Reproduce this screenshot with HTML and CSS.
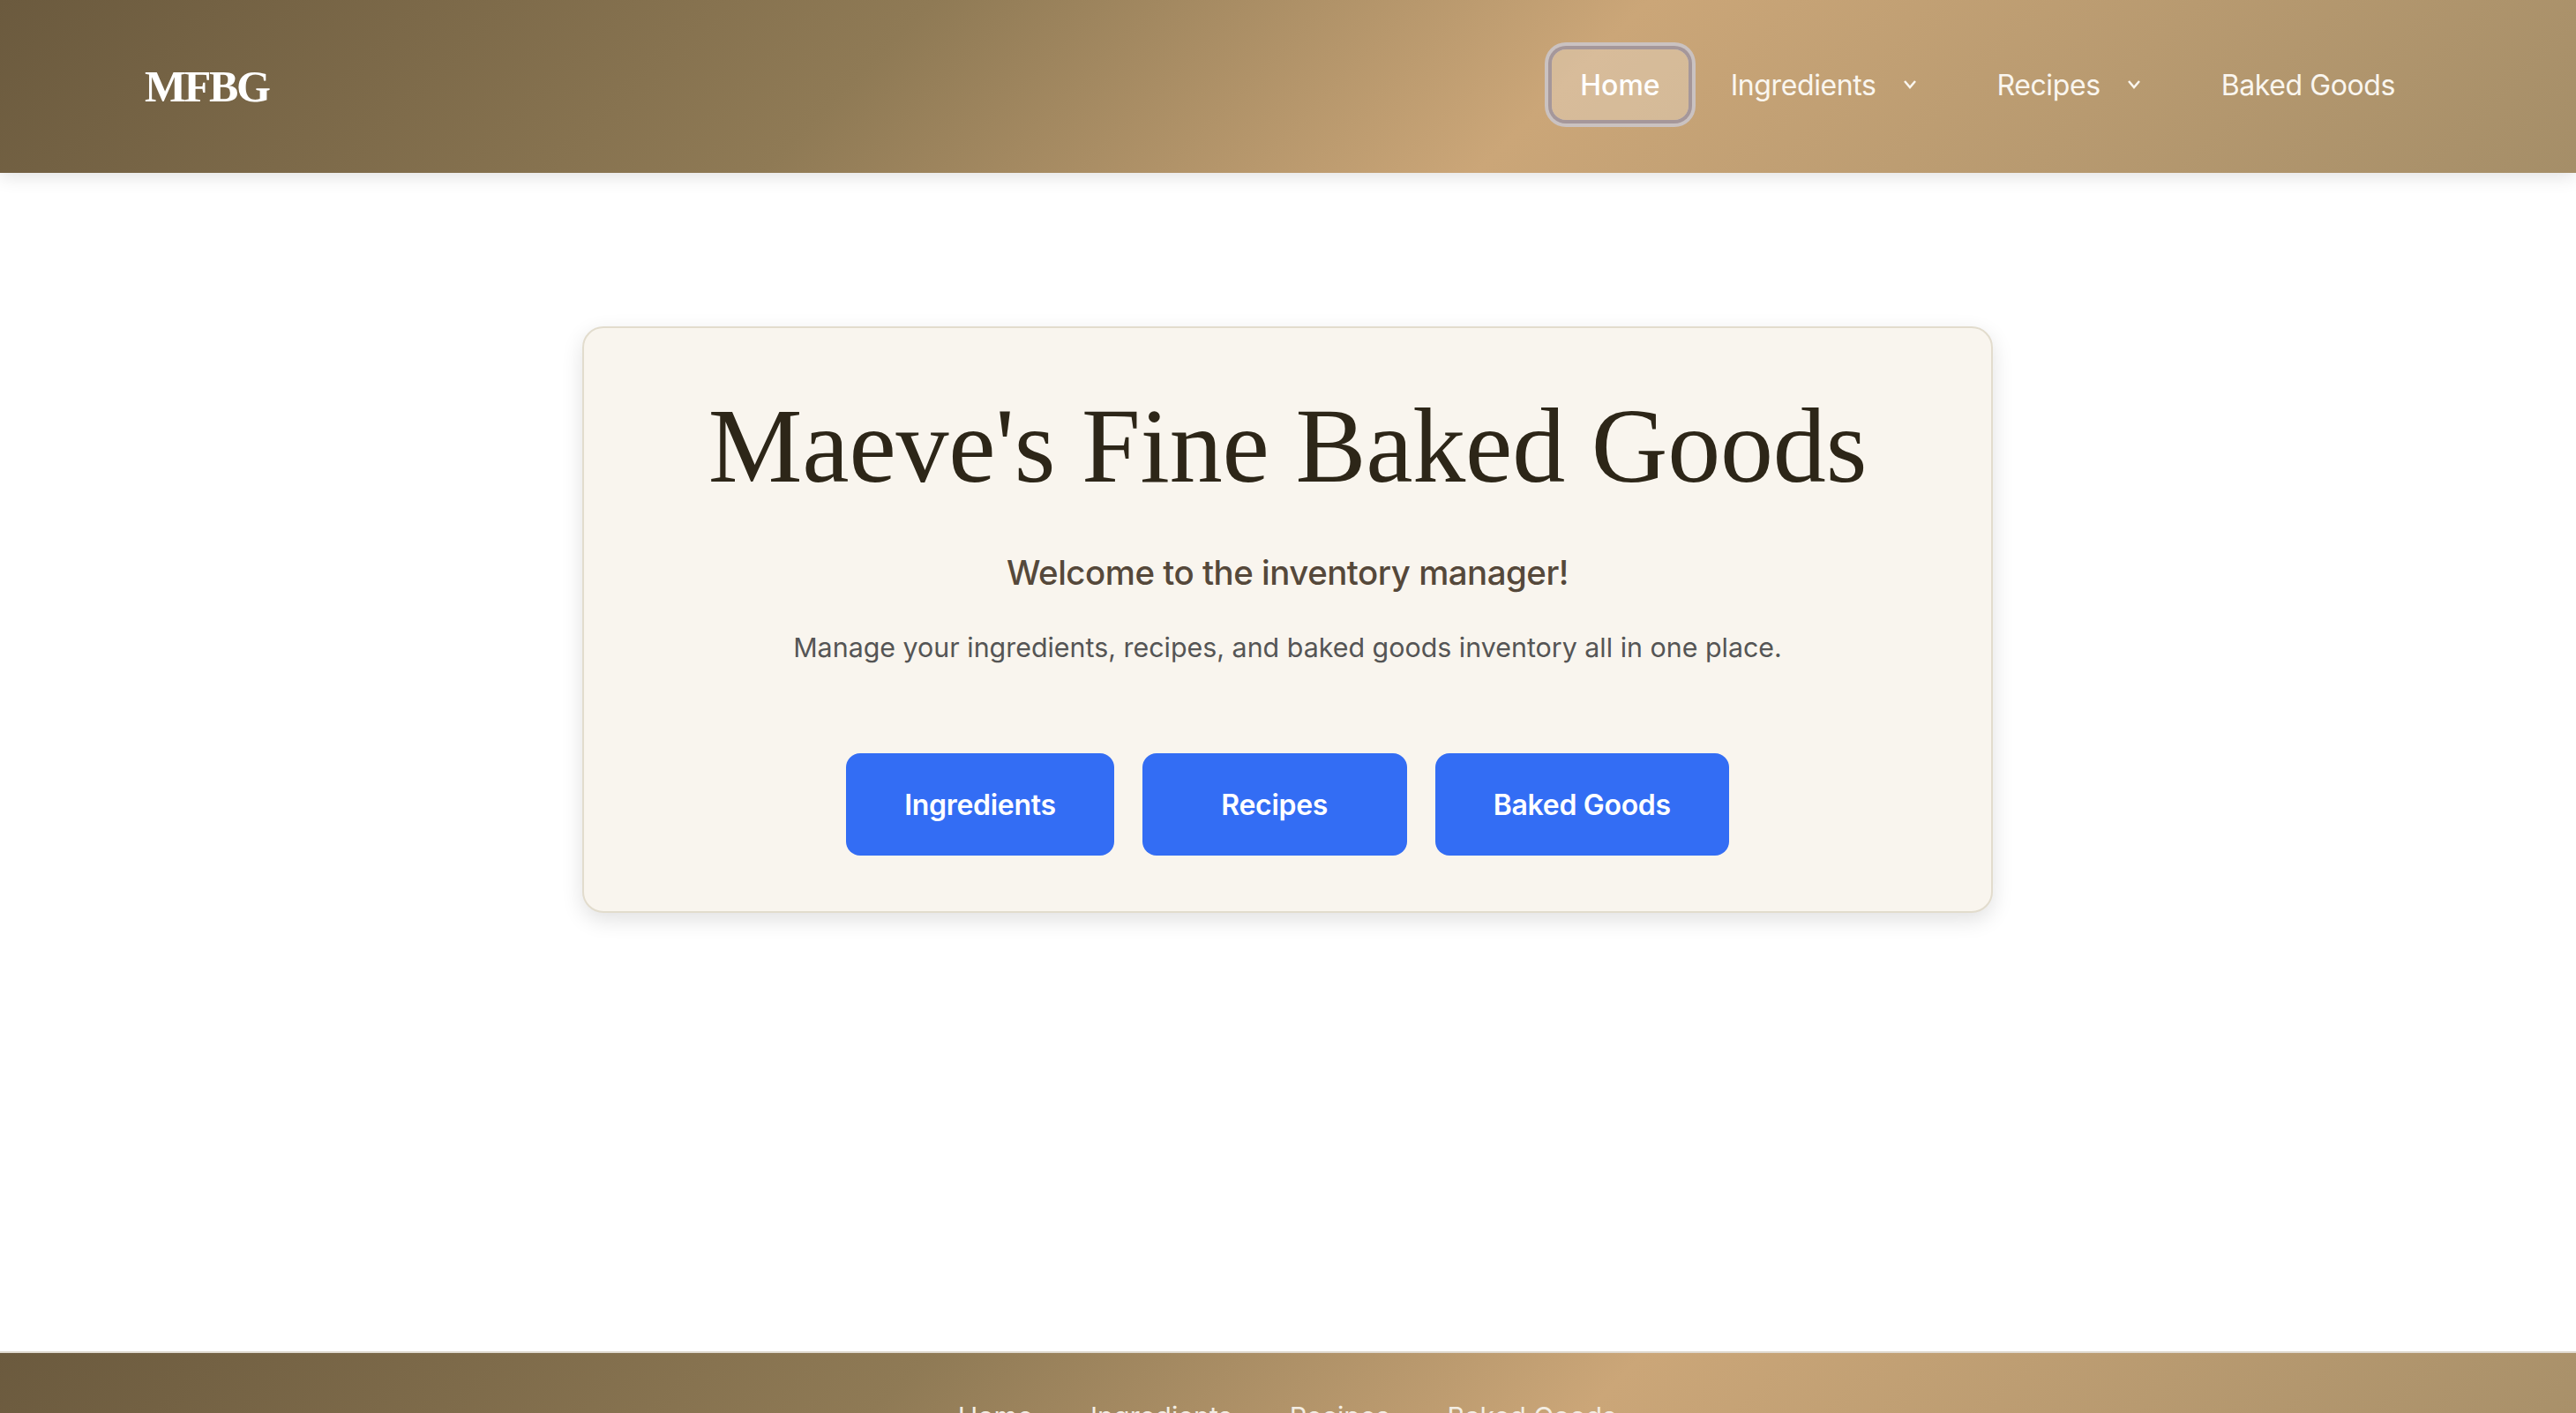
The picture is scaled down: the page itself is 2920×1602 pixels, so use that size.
FILE: index.html
```html
<!DOCTYPE html>
<html lang="en">
<head>
<meta charset="utf-8">
<title>MFBG</title>
<link rel="stylesheet" href="styles.css">
</head>
<body>
<header class="topbar">
  <a class="brand" href="#">MFBG</a>
  <nav class="nav">
    <a class="nav-link active" href="#">Home</a>
    <a class="nav-link has-menu" href="#">Ingredients
      <svg class="chevron" viewBox="0 0 32 32" aria-hidden="true"><path d="M10 12l6 7 6-7"/></svg>
    </a>
    <a class="nav-link has-menu" href="#">Recipes
      <svg class="chevron" viewBox="0 0 32 32" aria-hidden="true"><path d="M10 12l6 7 6-7"/></svg>
    </a>
    <a class="nav-link" href="#">Baked Goods</a>
  </nav>
</header>
<main class="main">
  <section class="card">
    <h1 class="title">Maeve's Fine Baked Goods</h1>
    <p class="lead">Welcome to the inventory manager!</p>
    <p class="desc">Manage your ingredients, recipes, and baked goods inventory all in one place.</p>
    <div class="actions">
      <a class="btn" href="#">Ingredients</a>
      <a class="btn" href="#">Recipes</a>
      <a class="btn" href="#">Baked Goods</a>
    </div>
  </section>
</main>
<footer class="footer">
  <a href="#">Home</a>
  <a href="#">Ingredients</a>
  <a href="#">Recipes</a>
  <a href="#">Baked Goods</a>
</footer>
</body>
</html>
```

FILE: styles.css
```css
* { box-sizing: border-box; }
html, body { margin: 0; height: 100%; overflow: hidden; }
body {
  display: flex;
  flex-direction: column;
  background: #fff;
  font-family: Inter, "Liberation Sans", sans-serif;
}
a { text-decoration: none; color: inherit; }

.topbar {
  flex: none;
  height: 196px;
  padding: 0 173px 0 164px;
  display: flex;
  align-items: center;
  justify-content: space-between;
  background: linear-gradient(135deg, #6b5a3e 0%, #8f7a55 34%, #cba678 60%, #a58e68 100%);
  box-shadow: 0 4px 20px rgba(0, 0, 0, 0.12);
  position: relative;
}
.brand {
  font-family: "Liberation Serif", serif;
  font-weight: 700;
  font-size: 50px;
  line-height: 1;
  letter-spacing: -2.4px;
  color: #fff;
}
.nav { display: flex; align-items: center; gap: 16px; margin-bottom: 4px; }
.nav-link {
  display: flex;
  align-items: center;
  height: 80px;
  padding: 0 32px;
  border-radius: 16px;
  font-size: 32px;
  font-weight: 400;
  letter-spacing: -0.4px;
  color: #faf6ef;
}
.nav-link.has-menu { padding-right: 35px; }
.nav-link.active {
  font-weight: 500;
  letter-spacing: 0;
  color: #fff;
  background: rgba(255, 255, 255, 0.25);
  box-shadow: 0 0 0 4px #a5979a, 0 0 0 8px #cac2c1;
}
.chevron {
  width: 32px;
  height: 32px;
  margin-left: 22px;
  fill: none;
  stroke: #faf6ef;
  stroke-width: 2.5;
}

.main {
  flex: none;
  height: 1336px;
  padding-top: 174px;
  display: flex;
  flex-direction: column;
  align-items: center;
}
.card {
  width: 1599px;
  height: 665px;
  margin-right: 1px;
  padding: 61px 64px 0;
  background: #f9f5ee;
  border: 2px solid #e2dccd;
  border-radius: 24px;
  box-shadow: 0 8px 24px rgba(0, 0, 0, 0.12);
  text-align: center;
}
.title {
  margin: 0;
  font-family: "Liberation Serif", serif;
  font-weight: 400;
  font-size: 120px;
  line-height: 146px;
  letter-spacing: -0.2px;
  color: #2d2618;
}
.lead {
  margin: 42px 0 0;
  font-size: 38.4px;
  font-weight: 500;
  line-height: 56px;
  letter-spacing: -0.47px;
  color: #55483a;
}
.desc {
  margin: 33px 0 0;
  font-size: 30.4px;
  line-height: 48px;
  color: #555;
}
.actions {
  margin-top: 96px;
  display: flex;
  justify-content: center;
  gap: 32px;
}
.btn {
  display: flex;
  align-items: center;
  justify-content: center;
  min-width: 300px;
  height: 116px;
  padding: 0 66px;
  border-radius: 16px;
  background: #336df4;
  color: #fff;
  font-size: 32px;
  font-weight: 600;
  letter-spacing: -0.3px;
}

.footer {
  flex: none;
  height: 190px;
  padding-top: 54px;
  padding-right: 2px;
  display: flex;
  justify-content: center;
  align-items: flex-start;
  gap: 65px;
  border-top: 2px solid #dfd9cf;
  background: linear-gradient(135deg, #6b5a3e 0%, #8f7a55 34%, #cba678 60%, #a58e68 100%);
  font-size: 30.4px;
  color: #f3ede3;
}
```
